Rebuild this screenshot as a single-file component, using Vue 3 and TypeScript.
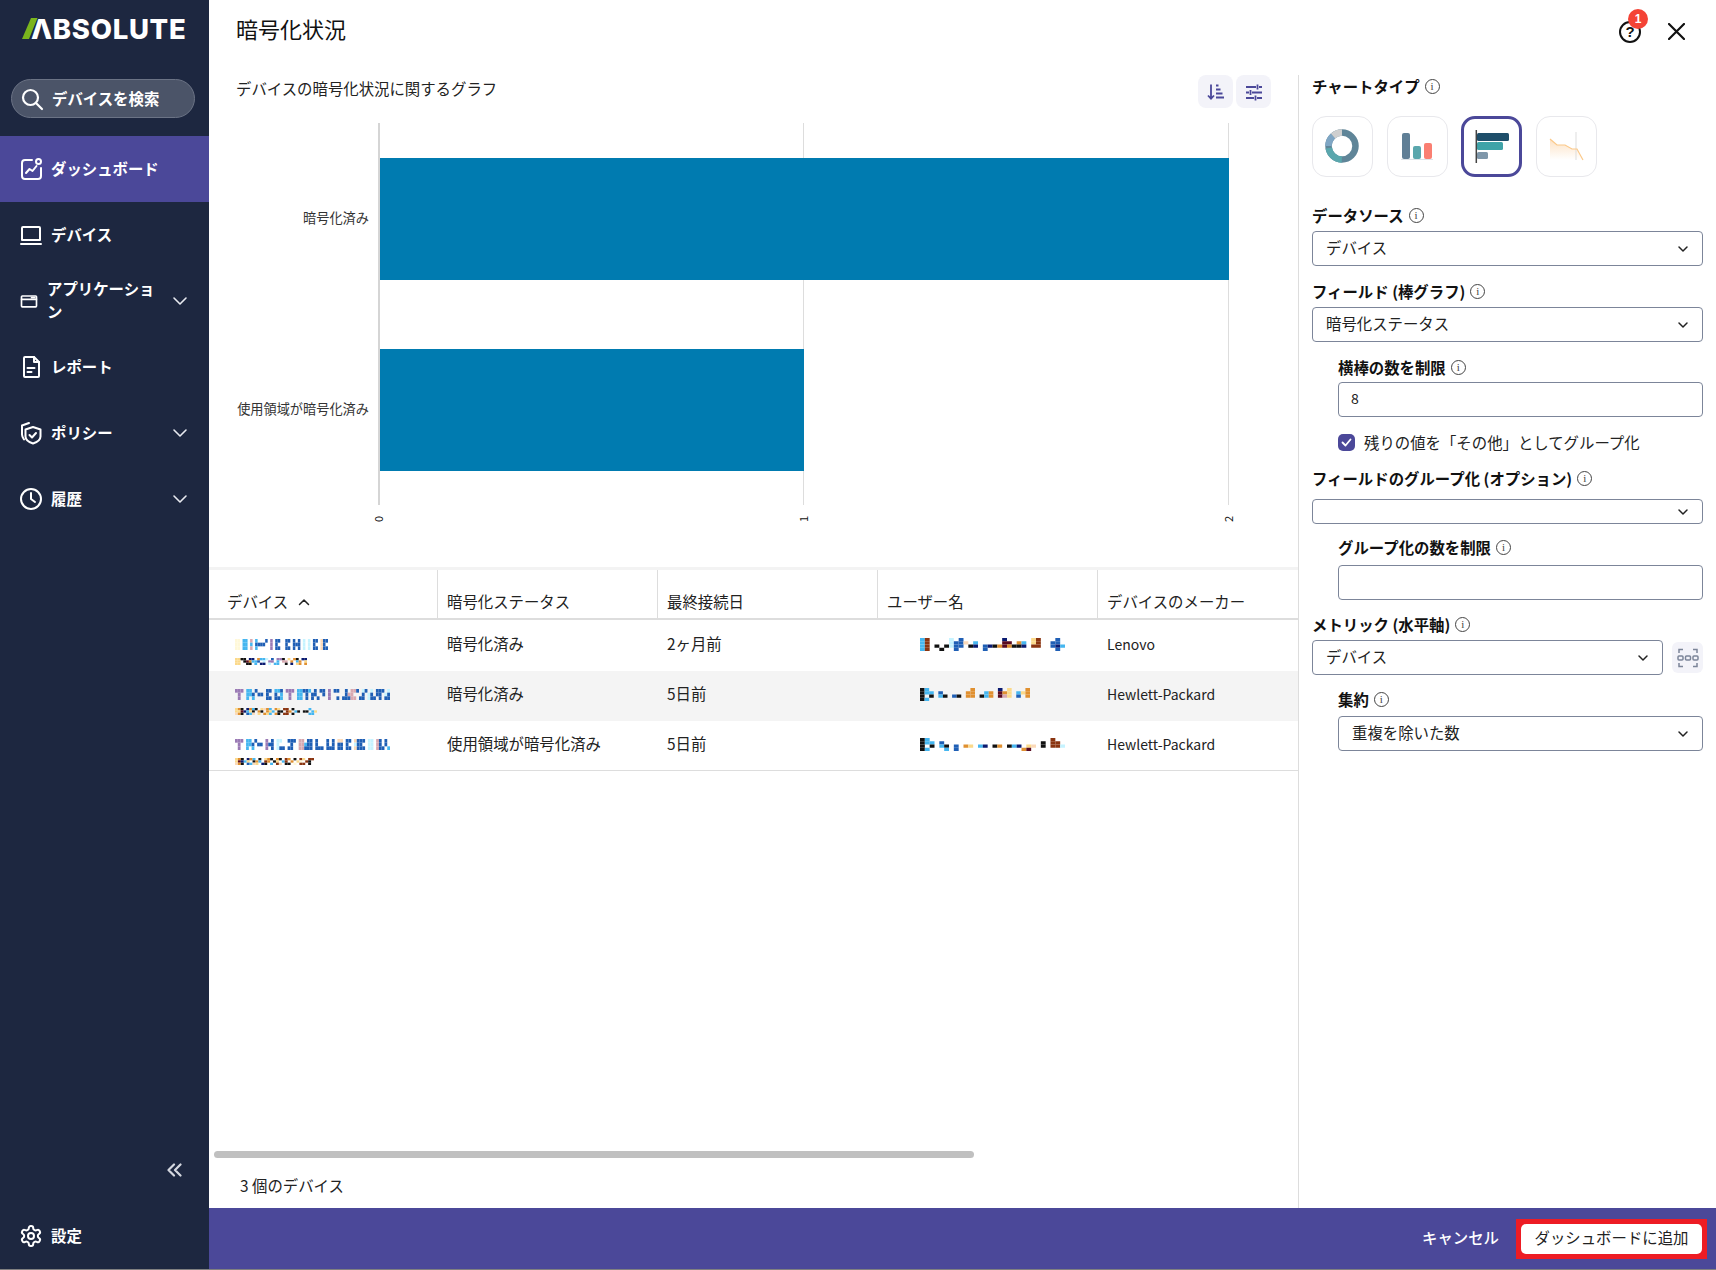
<script setup lang="ts">
type Row = {
  name: string[]
  nameW: number
  sn: string[]
  snW: number
  status: string
  last: string
  user: string[]
  userW: number
  maker: string
}

const navItems = [
  { label: 'ダッシュボード', icon: 'dashboard', active: true },
  { label: 'デバイス', icon: 'laptop' },
  { label: 'アプリケーション', icon: 'app', chevron: true },
  { label: 'レポート', icon: 'report' },
  { label: 'ポリシー', icon: 'policy', chevron: true },
  { label: '履歴', icon: 'history', chevron: true }
]

const icons: Record<string, string[]> = {
  dashboard: [
    'M13 3H6a3 3 0 0 0-3 3v13a3 3 0 0 0 3 3h13a3 3 0 0 0 3-3v-8',
    'M22 4.500a2.500 2.500 0 1 1-5 0a2.500 2.500 0 1 1 5 0',
    'M7 16l3.500-4 3 2 4-5'
  ],
  laptop: ['M4 4h16a1 1 0 0 1 1 1v12H3V5a1 1 0 0 1 1-1z', 'M2 21h20'],
  app: ['M4 6h16a1 1 0 0 1 1 1v11a1 1 0 0 1-1 1H4a1 1 0 0 1-1-1V7a1 1 0 0 1 1-1z', 'M3 10h18', 'M15 8h4'],
  report: [
    'M6 2h9l5 5v14a1 1 0 0 1-1 1H6a1 1 0 0 1-1-1V3a1 1 0 0 1 1-1z',
    'M15 2v5h5',
    'M8.500 13h7',
    'M8.500 17h4'
  ],
  policy: [
    'M14 6l7.500 2.500v7c0 3-3 5.500-7.500 7-4.500-1.500-7.500-4-7.500-7v-7z',
    'M10.500 14l2.500 2.500 4-4.500',
    'M10 2L3 4.500v9c0 2 1 3.500 2 5'
  ],
  history: ['M22 12a10 10 0 1 1-20 0a10 10 0 1 1 20 0', 'M12 6v6l4 3'],
  gear: [
    'M12.22 2h-.44a2 2 0 0 0-2 2v.18a2 2 0 0 1-1 1.73l-.43.25a2 2 0 0 1-2 0l-.15-.08a2 2 0 0 0-2.73.73l-.22.38a2 2 0 0 0 .73 2.73l.15.1a2 2 0 0 1 1 1.72v.51a2 2 0 0 1-1 1.74l-.15.09a2 2 0 0 0-.73 2.73l.22.38a2 2 0 0 0 2.73.73l.15-.08a2 2 0 0 1 2 0l.43.25a2 2 0 0 1 1 1.73V20a2 2 0 0 0 2 2h.44a2 2 0 0 0 2-2v-.18a2 2 0 0 1 1-1.73l.43-.25a2 2 0 0 1 2 0l.15.08a2 2 0 0 0 2.73-.73l.22-.39a2 2 0 0 0-.73-2.73l-.15-.08a2 2 0 0 1-1-1.74v-.5a2 2 0 0 1 1-1.74l.15-.09a2 2 0 0 0 .73-2.73l-.22-.38a2 2 0 0 0-2.73-.73l-.15.08a2 2 0 0 1-2 0l-.43-.25a2 2 0 0 1-1-1.73V4a2 2 0 0 0-2-2z',
    'M15 12a3 3 0 1 1-6 0a3 3 0 1 1 6 0'
  ]
}

const columns = ['暗号化ステータス', '最終接続日', 'ユーザー名', 'デバイスのメーカー']

// マスクされた文字列をモザイクとして描く
const palette: Record<string, string> = {
  a: '#1f5fb5',
  b: '#45b6f0',
  c: '#c6f3ff',
  d: '#fff8d8',
  e: '#fbd9b8',
  f: '#9a7ab5',
  g: '#d8a8b0',
  h: '#0a1a70',
  i: '#8a3410',
  j: '#e09030',
  k: '#fbd98a',
  l: '#111111',
  m: '#5a0a20'
}

const rows: Row[] = [
  {
    name: [
      'dd.bb.g.b...a.f.aa..aa.a.a.c.c.aa.eaa',
      'dd.bb.b.aaaa..f.a...a..aaa.c.c.a..ea.',
      'dd.bb.g.b.....f.aa..aa.a.a.c.c.aa.eaa'
    ],
    nameW: 93,
    sn: ['kkll.hh.jbbc.a.ffl.k.jl.hh', 'kk.lmjbba.c.ff.b.gg.j.bj.k', 'kk..ll.b.hh.c.bb..l.h.kj.j'],
    snW: 72,
    status: '暗号化済み',
    last: '2ヶ月前',
    user: [
      'bi....c.a........h.....ki...a.',
      'bi....caae.b.....mm.jb.ki..aa.',
      'bi.l.lcaa.lh.ahljmjllh.ii..ahb',
      'bi..l..a.....a..............a.'
    ],
    userW: 145,
    maker: 'Lenovo'
  },
  {
    name: [
      'fff.bb.a...aa.bba.fff.bbaab.a.aa.f.aa..a.gga.ca.c.aaa.c',
      '.f..bba.aa.a..a.b..f..bb.a.aa..a.f.....agg...a.ca.aa.ca',
      '.f..b.b....aa.aab..f..bb.a.a.a...f..a.aaagg.aa.caa.a.aa'
    ],
    nameW: 155,
    sn: [
      'kjl.hjbl.kejb.jk.ii.l.....b.',
      'kkmhbkl.jl.jkb.ll.ij.bl.ll.bk',
      'ejl.abe.k.jkb.jl.ii.l.....bb'
    ],
    snW: 82,
    status: '暗号化済み',
    last: '5日前',
    user: [
      'lb.........j.....h.k...j',
      'lbb.a.....jj..bj.mjk.bkj',
      'l.l.bl.al.jj.lbj.mgk.a.j',
      'lb......................'
    ],
    userW: 110,
    maker: 'Hewlett-Packard'
  },
  {
    name: [
      'fff.bb.a...f.a.cc..aaa.gg.aa.a...a.a.ee.aa.eaaa.cc.ga.a',
      '.f..bba.aa.faa.c....a..ggbaa.a...a.a.aa.a..caa..cc.ga.a',
      '.f..b.b....f.a.caa.aa..ggaaa.aaa.aaa.aa.aa.eaaa.cc.gaa.b'
    ],
    nameW: 155,
    sn: [
      'kjl.hjb.l.kjl.jl.ij.l.ik.ii',
      'kmhbk.ljb.ij.lk.bi.j.kd.il',
      'ejl.abek.hl.b.ie.ll.d.ii.l'
    ],
    snW: 79,
    status: '使用領域が暗号化済み',
    last: '5日前',
    user: [
      'lb.........................i..',
      'lbb.a....................l.ii.',
      'l.l.bl.a.jk.bh.lj.lbh.ke.l.iic',
      'lb...b.a.............jm.......'
    ],
    userW: 145,
    maker: 'Hewlett-Packard'
  }
]

function cells(source: string[], width: number, height: number) {
  const cols = Math.max(...source.map((r) => r.length))
  const w = width / cols
  const h = height / source.length
  const out: { x: number; y: number; w: number; h: number; fill: string }[] = []
  source.forEach((line, y) => {
    line.split('').forEach((ch, x) => {
      if (palette[ch]) out.push({ x: x * w, y: y * h, w, h, fill: palette[ch] })
    })
  })
  return out
}
</script>

<template>
  <div class="app">
    <aside class="sidebar">
      <div class="logo">
        <svg class="logo-slash" width="16" height="21" viewBox="0 0 16 21"><polygon points="0,21 9,0 15.500,0 7,21" fill="#7ab51d" /></svg>
        <span>ΛBSOLUTE</span>
      </div>
      <div class="search">
        <svg width="24" height="24" viewBox="0 0 24 24" fill="none" stroke="#fff" stroke-width="2.200" stroke-linecap="round">
          <circle cx="10.500" cy="10.500" r="7.500" />
          <path d="M16 16l6 6" />
        </svg>
        <span>デバイスを検索</span>
      </div>
      <nav class="nav">
        <div v-for="item in navItems" :key="item.label" class="nav-item" :class="{ active: item.active }">
          <svg class="nav-icon" :class="{ small: item.icon === 'app' }" width="24" height="24" viewBox="0 0 24 24" fill="none" stroke="#fff" stroke-width="2" stroke-linecap="round" stroke-linejoin="round">
            <path v-for="d in icons[item.icon]" :key="d" :d="d" />
          </svg>
          <span class="nav-label">{{ item.label }}</span>
          <svg v-if="item.chevron" class="nav-chevron" width="16" height="10" viewBox="0 0 16 10" fill="none" stroke="#e8eaf0" stroke-width="1.600" stroke-linecap="round" stroke-linejoin="round"><path d="M2 2l6 6 6-6" /></svg>
        </div>
      </nav>
      <div class="collapse">
        <svg width="15" height="14" viewBox="0 0 15 14" fill="none" stroke="#d5d8e0" stroke-width="2.200" stroke-linecap="round" stroke-linejoin="round"><path d="M7 1.500L1.500 7 7 12.500M13.500 1.500L8 7l5.500 5.500" /></svg>
      </div>
      <div class="nav-item settings">
        <svg class="nav-icon" width="24" height="24" viewBox="0 0 24 24" fill="none" stroke="#fff" stroke-width="2" stroke-linecap="round" stroke-linejoin="round">
          <path v-for="d in icons.gear" :key="d" :d="d" />
        </svg>
        <span class="nav-label">設定</span>
      </div>
    </aside>

    <main class="main">
      <header class="header">
        <h1 class="title">暗号化状況</h1>
        <div class="help">
          <svg width="22" height="22" viewBox="0 0 22 22" fill="none" stroke="#111" stroke-width="2"><circle cx="11" cy="11" r="10" /></svg>
          <span class="help-q">?</span>
          <span class="badge">1</span>
        </div>
        <svg class="close" width="17" height="17" viewBox="0 0 17 17" fill="none" stroke="#111" stroke-width="2.200" stroke-linecap="round"><path d="M1 1l15 15M16 1L1 16" /></svg>
      </header>

      <div class="body">
        <section class="left">
          <div class="chart-head">
            <span class="chart-title">デバイスの暗号化状況に関するグラフ</span>
            <div class="tool-btn">
              <svg width="18" height="18" viewBox="0 0 18 18" fill="none" stroke="#4b4899" stroke-width="1.800"><path d="M4 1.500v14M1 12.500l3 3.200 3-3.200M9 2.500h2.500M9 6.500h4.500M9 10.500h6.500M9 14.500h8" /></svg>
            </div>
            <div class="tool-btn">
              <svg width="18" height="18" viewBox="0 0 18 18" fill="none" stroke="#4b4899" stroke-width="1.800"><path d="M1 4h10M14 4h3M12.500 1.500V6.500M1 9.500h3M7 9.500h10M5.500 7v5M1 15h8M12 15h5M10.500 12.500v5" /></svg>
            </div>
          </div>

          <svg class="chart" width="1089" height="459" viewBox="0 0 1089 459">
            <line x1="170" y1="15" x2="170" y2="397" stroke="#d5d5d5" stroke-width="2" />
            <line x1="594.500" y1="15" x2="594.500" y2="397" stroke="#dddddd" />
            <line x1="1019.500" y1="15" x2="1019.500" y2="397" stroke="#dddddd" />
            <rect x="171" y="50" width="849" height="122" fill="#007bb0" />
            <rect x="171" y="241" width="424" height="122" fill="#007bb0" />
            <text class="cat" x="160" y="109" text-anchor="end" dominant-baseline="central">暗号化済み</text>
            <text class="cat" x="160" y="300" text-anchor="end" dominant-baseline="central">使用領域が暗号化済み</text>
            <text class="tick" transform="translate(169 411) rotate(-90)" text-anchor="middle" dominant-baseline="central">0</text>
            <text class="tick" transform="translate(594 411) rotate(-90)" text-anchor="middle" dominant-baseline="central">1</text>
            <text class="tick" transform="translate(1019 411) rotate(-90)" text-anchor="middle" dominant-baseline="central">2</text>
          </svg>

          <div class="table">
            <div class="thead">
              <div class="th first">デバイス
                <svg width="12" height="8" viewBox="0 0 12 8" fill="none" stroke="#222" stroke-width="1.500" stroke-linecap="round" stroke-linejoin="round"><path d="M1.500 6.500L6 2l4.500 4.500" /></svg>
              </div>
              <div v-for="col in columns" :key="col" class="th">{{ col }}</div>
            </div>
            <div v-for="row in rows" :key="row.snW" class="tr">
              <div class="td first">
                <svg class="mask" :width="row.nameW" height="11">
                  <rect v-for="(c, i) in cells(row.name, row.nameW, 11)" :key="i" :x="c.x" :y="c.y" :width="c.w" :height="c.h" :fill="c.fill" />
                </svg>
                <svg class="mask sn" :width="row.snW" height="7">
                  <rect v-for="(c, i) in cells(row.sn, row.snW, 7)" :key="i" :x="c.x" :y="c.y" :width="c.w" :height="c.h" :fill="c.fill" />
                </svg>
              </div>
              <div class="td">{{ row.status }}</div>
              <div class="td">{{ row.last }}</div>
              <div class="td user">
                <svg class="mask" :width="row.userW" height="13">
                  <rect v-for="(c, i) in cells(row.user, row.userW, 13)" :key="i" :x="c.x" :y="c.y" :width="c.w" :height="c.h" :fill="c.fill" />
                </svg>
              </div>
              <div class="td latin">{{ row.maker }}</div>
            </div>
          </div>

          <div class="spacer"></div>
          <div class="scroll-thumb"></div>
          <div class="count">3 個のデバイス</div>
        </section>

        <aside class="panel">
          <div class="lbl first-lbl">チャートタイプ<i class="info">i</i></div>
          <div class="tiles">
            <div class="tile">
              <svg width="59" height="59" viewBox="1 1 59 59" fill="none">
                <circle cx="30" cy="30" r="13.500" stroke="#5f8598" stroke-width="6.500" />
                <path d="M16.800 32a13.500 13.500 0 0 0 13 11.500" stroke="#5aa7ad" stroke-width="6.500" />
                <path d="M21 20a13.500 13.500 0 0 0-4.500 10" stroke="#7fa6c4" stroke-width="6.500" />
                <path d="M30 16.500a13.500 13.500 0 0 0-9 3.500" stroke="#cfcfcf" stroke-width="6.500" />
              </svg>
            </div>
            <div class="tile">
              <svg width="59" height="59" viewBox="1 1 59 59">
                <rect x="15" y="17" width="8" height="26" rx="2" fill="#607f96" />
                <rect x="26" y="30" width="8" height="13" rx="2" fill="#5aa7ad" />
                <rect x="37" y="27" width="8" height="16" rx="2" fill="#fa7f72" />
                <line x1="14" y1="43.500" x2="46" y2="43.500" stroke="#dde3e8" />
              </svg>
            </div>
            <div class="tile selected">
              <svg width="55" height="55" viewBox="3 3 55 55">
                <rect x="16" y="17" width="32" height="8" rx="1.500" fill="#1e4e6a" />
                <rect x="16" y="26" width="26" height="8" rx="1.500" fill="#3fa3a8" />
                <rect x="16" y="36" width="11" height="7" rx="1.500" fill="#7f97aa" />
                <line x1="15.300" y1="14" x2="15.300" y2="47" stroke="#444" stroke-width="1.500" />
              </svg>
            </div>
            <div class="tile">
              <svg width="59" height="59" viewBox="1 1 59 59" fill="none">
                <defs>
                  <linearGradient id="areaFill" x1="0" y1="0" x2="0" y2="1">
                    <stop offset="0" stop-color="#fde2c4" />
                    <stop offset="1" stop-color="#ffffff" />
                  </linearGradient>
                </defs>
                <path d="M14 23l7 6h8l7 4h5l6 11H14z" fill="url(#areaFill)" />
                <line x1="40" y1="16" x2="40" y2="44" stroke="#dddddd" />
                <path d="M14 23l7 6h8l7 4h5l6 11" stroke="#fbc98a" stroke-width="1.200" />
              </svg>
            </div>
          </div>

          <div class="lbl source-lbl">データソース<i class="info">i</i></div>
          <div class="ctl select">デバイス<svg class="chev" width="12" height="8" viewBox="0 0 12 8" fill="none" stroke="#222" stroke-width="1.500" stroke-linecap="round" stroke-linejoin="round"><path d="M2 2l4 4 4-4" /></svg></div>

          <div class="lbl">フィールド (棒グラフ)<i class="info">i</i></div>
          <div class="ctl select">暗号化ステータス<svg class="chev" width="12" height="8" viewBox="0 0 12 8" fill="none" stroke="#222" stroke-width="1.500" stroke-linecap="round" stroke-linejoin="round"><path d="M2 2l4 4 4-4" /></svg></div>

          <div class="lbl sub">横棒の数を制限<i class="info">i</i></div>
          <div class="ctl input sub-ctl tight">8</div>

          <div class="check">
            <span class="box"><svg width="11" height="9" viewBox="0 0 11 9" fill="none" stroke="#fff" stroke-width="1.800" stroke-linecap="round" stroke-linejoin="round"><path d="M1.500 4.500l3 3 5-6" /></svg></span>
            残りの値を「その他」としてグループ化
          </div>

          <div class="lbl">フィールドのグループ化 (オプション)<i class="info">i</i></div>
          <div class="ctl select short">
            <svg class="chev" width="12" height="8" viewBox="0 0 12 8" fill="none" stroke="#222" stroke-width="1.500" stroke-linecap="round" stroke-linejoin="round"><path d="M2 2l4 4 4-4" /></svg>
          </div>

          <div class="lbl sub tight-top">グループ化の数を制限<i class="info">i</i></div>
          <div class="ctl input sub-ctl loose"></div>

          <div class="lbl metric-lbl">メトリック (水平軸)<i class="info">i</i></div>
          <div class="metric-row">
            <div class="ctl select grow">デバイス<svg class="chev" width="12" height="8" viewBox="0 0 12 8" fill="none" stroke="#222" stroke-width="1.500" stroke-linecap="round" stroke-linejoin="round"><path d="M2 2l4 4 4-4" /></svg></div>
            <div class="fit-btn">
              <svg width="22" height="20" viewBox="0 0 22 20" fill="none" stroke="#7c8599" stroke-width="1.500"><path d="M2 5V1.500h4M16 1.500h4V5M2 15v3.500h4M16 18.500h4V15" /><rect x="1" y="8" width="5" height="4" rx="1" /><rect x="8.500" y="8" width="5" height="4" rx="1" /><rect x="16" y="8" width="5" height="4" rx="1" /></svg>
            </div>
          </div>

          <div class="lbl sub metric-lbl">集約<i class="info">i</i></div>
          <div class="ctl select sub-ctl mid">重複を除いた数<svg class="chev" width="12" height="8" viewBox="0 0 12 8" fill="none" stroke="#222" stroke-width="1.500" stroke-linecap="round" stroke-linejoin="round"><path d="M2 2l4 4 4-4" /></svg></div>
        </aside>
      </div>

      <footer class="footer">
        <span class="cancel">キャンセル</span>
        <div class="add-wrap"><button class="add-btn">ダッシュボードに追加</button></div>
      </footer>
    </main>
  </div>
</template>

<style>
html,
body {
  margin: 0;
  background: #fff;
}
</style>

<style scoped>
.app {
  display: flex;
  width: 1716px;
  height: 1270px;
  box-sizing: border-box;
  border-bottom: 1px solid #808080;
  overflow: hidden;
  font-family: "Noto Sans CJK JP", "Noto Sans", sans-serif;
  font-size: 15.4px;
  line-height: 22px;
  color: #222;
}
.sidebar {
  flex: 0 0 209px;
  display: flex;
  flex-direction: column;
  background: #1d2740;
  color: #fff;
}
.logo {
  height: 79px;
  box-sizing: border-box;
  padding: 18px 0 0 22px;
  display: flex;
  align-items: flex-start;
  font-family: Inter, "Liberation Sans", sans-serif;
  font-size: 27.5px;
  font-weight: 800;
  line-height: 22px;
  letter-spacing: 0.7px;
}
.logo-slash {
  margin-right: -7px;
}
.search {
  margin: 0 14px 0 11px;
  height: 39px;
  box-sizing: border-box;
  display: flex;
  align-items: center;
  gap: 8px;
  padding-left: 8px;
  background: #4b5468;
  border: 1px solid #6b7385;
  border-radius: 20px;
  font-weight: 700;
}
.search span {
  padding-bottom: 2px;
}
.nav {
  margin-top: 18px;
}
.nav-item {
  height: 66px;
  display: flex;
  align-items: center;
  padding: 0 21px 0 19px;
  gap: 8px;
  font-weight: 700;
  line-height: 23px;
}
.nav-item.active {
  background: #4b4899;
}
.nav-icon {
  flex: none;
}
.nav-icon.small {
  width: 20px;
  height: 20px;
}
.nav-label {
  flex: 1;
  padding-bottom: 2px;
}
.nav-chevron {
  flex: none;
}
.collapse {
  margin-top: auto;
  height: 30px;
  margin-bottom: 19px;
  display: flex;
  align-items: center;
  justify-content: flex-end;
  padding-right: 27px;
}
.settings {
  height: 64px;
  margin-bottom: 1px;
}
.main {
  flex: 1;
  display: flex;
  flex-direction: column;
  min-width: 0;
}
.header {
  height: 75px;
  flex: none;
  display: flex;
  align-items: flex-start;
  padding: 0 31px 0 27px;
}
.title {
  margin: 12px auto 0 0;
  font-size: 22px;
  line-height: 32px;
  font-weight: 400;
  color: #111;
}
.help {
  position: relative;
  width: 22px;
  height: 22px;
  margin-top: 21px;
  margin-right: 27px;
}
.help svg {
  display: block;
}
.help-q {
  position: absolute;
  inset: 0;
  text-align: center;
  font-family: "Liberation Sans", sans-serif;
  font-weight: 700;
  font-size: 15px;
  line-height: 22px;
  color: #111;
}
.badge {
  position: absolute;
  left: 9px;
  top: -12px;
  width: 20px;
  height: 20px;
  border-radius: 50%;
  background: #f44336;
  color: #fff;
  font-family: "Liberation Sans", sans-serif;
  font-size: 12px;
  font-weight: 700;
  line-height: 20px;
  text-align: center;
}
.close {
  margin-top: 23px;
}
.body {
  flex: 1;
  display: flex;
  min-height: 0;
}
.left {
  flex: 0 0 1089px;
  width: 1089px;
  display: flex;
  flex-direction: column;
  min-width: 0;
  overflow: hidden;
}
.chart-head {
  height: 33px;
  flex: none;
  display: flex;
  align-items: center;
  gap: 3px;
  padding: 0 27px 0 27px;
}
.chart-title {
  margin-right: auto;
  margin-bottom: 8px;
  color: #222;
}
.tool-btn {
  width: 35px;
  height: 33px;
  border-radius: 8px;
  background: #f3f3f9;
  display: flex;
  align-items: center;
  justify-content: center;
}
.chart {
  display: block;
  flex: none;
}
.cat {
  font-size: 13.2px;
  fill: #333;
}
.tick {
  font-size: 11px;
  fill: #111;
}
.table {
  flex: none;
  border-top: 3px solid #f3f3f3;
}
.thead,
.tr {
  display: grid;
  grid-template-columns: 228px 220px 220px 220px 201px;
}
.thead {
  height: 48px;
  margin-bottom: 1px;
  border-bottom: 2px solid #ddd;
  box-sizing: content-box;
}
.th {
  display: flex;
  align-items: flex-end;
  gap: 10px;
  padding: 0 0 6px 9px;
  border-left: 1px solid #ddd;
  color: #222;
}
.th.first {
  padding-left: 18px;
  border-left: none;
}
.th svg {
  margin-bottom: 6px;
}
.tr {
  height: 50px;
}
.tr:nth-child(3) {
  background: #f4f4f4;
}
.tr:last-child {
  box-sizing: content-box;
  border-bottom: 1px solid #ddd;
  height: 49px;
}
.td {
  padding: 11px 0 0 10px;
}
.td.latin {
  padding-top: 12px;
  font-size: 14px;
}
.td.first {
  padding: 18px 0 0 26px;
}
.td.user {
  padding: 17px 0 0 43px;
}
.mask {
  display: block;
}
.sn {
  margin-top: 8px;
}
.spacer {
  flex: 1;
}
.scroll-thumb {
  flex: none;
  width: 760px;
  height: 7px;
  margin-left: 5px;
  border-radius: 4px;
  background: #c0c0c0;
}
.count {
  flex: none;
  height: 50px;
  box-sizing: border-box;
  padding: 16px 0 0 31px;
  color: #222;
}
.panel {
  flex: 1;
  box-sizing: border-box;
  border-left: 1px solid #ddd;
  padding: 0 13px 0 13px;
  min-width: 0;
}
.lbl {
  margin-top: 15px;
  margin-bottom: 2px;
  line-height: 20px;
  display: flex;
  align-items: center;
  font-weight: 700;
  color: #111;
}
.first-lbl {
  margin-top: 1px;
  margin-bottom: 1px;
}
.source-lbl {
  margin-top: 28px;
}
.metric-lbl {
  margin-top: 14px;
}
.sub {
  margin-left: 26px;
}
.tight-top {
  margin-top: 13px;
}
.info {
  width: 15px;
  height: 15px;
  margin-left: 5px;
  flex: none;
  box-sizing: border-box;
  border: 1.300px solid #444;
  border-radius: 50%;
  font-family: "Liberation Serif", serif;
  font-size: 11px;
  font-style: normal;
  font-weight: 400;
  line-height: 12px;
  text-align: center;
  color: #444;
}
.tiles {
  display: flex;
  gap: 13.700px;
  margin-top: 20px;
}
.tile {
  width: 61px;
  height: 61px;
  box-sizing: border-box;
  border: 1px solid #e8e8ec;
  border-radius: 14px;
  background: #fff;
}
.tile svg {
  display: block;
}
.tile.selected {
  border: 3px solid #4b4899;
}
.ctl {
  margin-top: 6px;
  height: 35px;
  box-sizing: border-box;
  border: 1px solid #7c8599;
  border-radius: 4px;
  display: flex;
  align-items: center;
  padding: 0 13px 3px 13px;
  background: #fff;
  color: #222;
}
.select {
  justify-content: space-between;
}
.chev {
  margin-top: 3px;
}
.short {
  margin-top: 11px;
  height: 25px;
  justify-content: flex-end;
  padding-bottom: 0;
}
.short .chev {
  margin-top: 0;
}
.sub-ctl {
  margin-left: 26px;
}
.tight {
  margin-top: 5px;
  padding-left: 12px;
  font-size: 14px;
}
.loose {
  margin-top: 8px;
}
.mid {
  margin-top: 7px;
}
.check {
  margin: 14px 0 1px 26px;
  display: flex;
  align-items: center;
  gap: 9px;
}
.box {
  width: 17px;
  height: 17px;
  border-radius: 5px;
  background: #4b4899;
  display: flex;
  align-items: center;
  justify-content: center;
}
.metric-row {
  display: flex;
  align-items: center;
  gap: 9px;
  margin-top: 6px;
}
.grow {
  flex: 1;
  margin-top: 0;
}
.fit-btn {
  width: 31px;
  height: 31px;
  border-radius: 6px;
  background: #f3f3f9;
  display: flex;
  align-items: center;
  justify-content: center;
}
.footer {
  flex: none;
  height: 61px;
  box-sizing: border-box;
  background: #4b4899;
  display: flex;
  align-items: center;
  justify-content: flex-end;
  gap: 17px;
  padding: 0 9px 0 0;
}
.cancel {
  color: #fff;
  font-weight: 500;
  margin-bottom: 4px;
}
.add-wrap {
  width: 191px;
  height: 40px;
  box-sizing: border-box;
  border: 5px solid #ed1c24;
  background: #ed1c24;
}
.add-btn {
  display: block;
  width: 100%;
  height: 100%;
  border: none;
  padding: 0 0 4px;
  border-radius: 5px;
  background: #fff;
  color: #222;
  font: inherit;
}
</style>
